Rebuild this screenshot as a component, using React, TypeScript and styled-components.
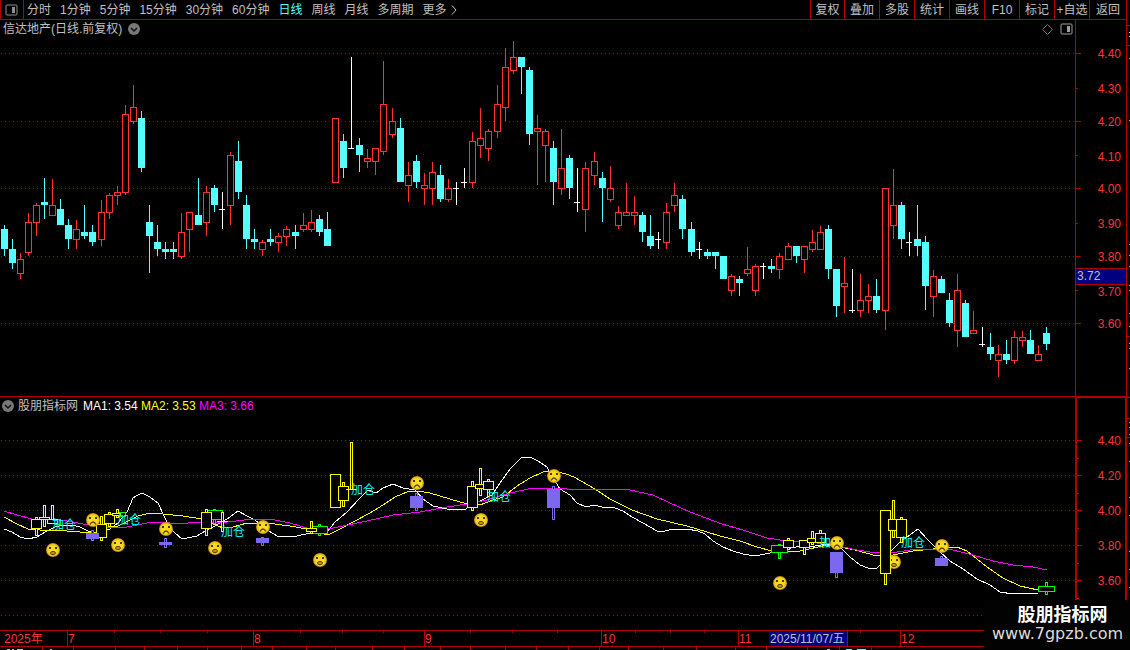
import React from "react";
import styled, { createGlobalStyle, css } from "styled-components";

const RED = "#b00000";
const LABEL_RED = "#ff3232";
const CYAN = "#54ffff";
const GREY = "#c0c0c0";
const FONT = '"Liberation Sans", "Noto Sans CJK SC", sans-serif';

const GlobalStyle = createGlobalStyle`
  * { box-sizing: border-box; }
  html, body { margin: 0; background: #000; }
  body { font: 12px/16px ${FONT}; color: ${GREY}; overflow: hidden; }
  button { font: inherit; color: inherit; background: none; border: 0; padding: 0; cursor: pointer; }
  svg { display: block; }
`;

/* ---------- layout ---------- */

const Page = styled.div`
  position: relative;
  display: flex;
  min-height: 100vh;
`;

const Workspace = styled.main`
  flex: 1;
  min-width: 0;
  display: flex;
  flex-direction: column;
`;

const SideStrip = styled.aside`
  width: 4px;
  border-left: 1px solid ${RED};
  overflow: hidden;
`;

const Toolbar = styled.nav`
  display: flex;
  justify-content: space-between;
  height: 20px;
  border-left: 1px solid ${RED};
  border-bottom: 1px solid ${RED};
`;

const Periods = styled.div`
  display: flex;
  align-items: center;
  gap: 9px;
`;

const PanelToggle = styled.button`
  display: flex;
  align-items: center;
  height: 19px;
  width: 23px;
  padding-left: 4px;
  margin-right: -6px;
  border-right: 1px solid ${RED};
`;

const PeriodTab = styled.button<{ $active?: boolean }>`
  height: 18px;
  white-space: nowrap;
  ${(p) => p.$active && css`color: ${CYAN};`}
`;

const MoreTab = styled(PeriodTab)`
  display: flex;
  align-items: center;
  gap: 4px;
`;

const Actions = styled.div`
  display: flex;
`;

const ActionButton = styled.button`
  width: 35px;
  padding-top: 1px;
  border-left: 1px solid ${RED};
  white-space: nowrap;
  &:first-child { width: 34px; }
  &:last-child { width: 37px; }
`;

const Pane = styled.section<{ $ruled?: boolean }>`
  display: flex;
  ${(p) => p.$ruled && css`border-bottom: 1px solid ${RED};`}
`;

const Plot = styled.div`
  flex: 1;
  min-width: 0;
`;

const PaneHeader = styled.header<{ $inset: number }>`
  display: flex;
  align-items: center;
  height: 20px;
  padding: 0 2px 2px ${(p) => p.$inset}px;
`;

const StockTitle = styled.h1`
  margin: 0 6px 0 0;
  font: inherit;
`;

const IndicatorTitle = styled.h2`
  margin: 0 5px 0 4px;
  font: inherit;
`;

const Reading = styled.span<{ $color: string }>`
  width: 58px;
  white-space: nowrap;
  color: ${(p) => p.$color};
`;

const HeaderTools = styled.div`
  display: flex;
  align-items: center;
  gap: 7px;
  margin-left: auto;
`;

const ChartSvg = styled.svg<{ $height: number }>`
  width: 100%;
  height: ${(p) => p.$height}px;
`;

const PriceAxis = styled.div<{ $heavy?: boolean }>`
  width: 51px;
  border-left: 1px solid ${RED};
  ${(p) => p.$heavy && css`
    width: 52px;
    margin: -1px -1px 0 0;
    border: 2px solid ${RED};
    border-bottom: 0;
    z-index: 1;
  `}
`;

const DateAxis = styled.div`
  position: relative;
  display: flex;
  height: 17px;
  border-top: 1px solid ${RED};
  border-bottom: 1px solid ${RED};
  color: ${LABEL_RED};
`;

const Month = styled.span<{ $span?: number }>`
  ${(p) => (p.$span ? css`width: ${p.$span}px;` : css`flex: 1;`)}
  border-left: 1px solid ${RED};
  &:first-child { border-left: 0; padding-left: 4px; }
`;

const DateTicks = styled.svg`
  position: absolute;
  inset: 0 auto auto 0;
  width: 100%;
  height: 2px;
`;

const DateCursor = styled.time`
  position: absolute;
  left: 769px;
  top: 0;
  width: 79px;
  height: 15px;
  padding-left: 1px;
  background: #000080;
  border-right: 1px solid ${RED};
  color: ${GREY};
  white-space: nowrap;
`;

const Footer = styled.footer`
  height: 3px;
  overflow: hidden;
`;

const Watermark = styled.a`
  position: absolute;
  right: 0;
  bottom: 0;
  z-index: 2;
  width: 146px;
  height: 50px;
  padding: 2px 6px 0 7px;
  background: #020202;
  color: #fff;
  text-align: center;
  text-decoration: none;
`;

const SiteName = styled.strong`
  display: block;
  padding-left: 10px;
  font: bold 18px/23px "Noto Sans CJK SC", sans-serif;
`;

const SiteUrl = styled.span`
  display: block;
  font: 16px/18px "DejaVu Sans", sans-serif;
  white-space: nowrap;
  color: #dcdcdc;
`;

/* ---------- data ---------- */

// centre x, high, body top, body bottom, low, kind (r = rise, c = fall, w = flat)
type Candle = [number, number, number, number, number, "r" | "c" | "w"];

const candles: Candle[] = [
  [4, 225, 229, 249, 256, "c"], [12, 239, 249, 263, 269, "c"], [20, 253, 259, 274, 279, "r"],
  [28, 213, 222, 253, 256, "r"], [36, 203, 205, 223, 236, "r"], [44, 178, 202, 205, 219, "c"],
  [52, 179, 205, 216, 216, "r"], [60, 199, 209, 225, 225, "c"], [68, 219, 225, 239, 249, "c"],
  [76, 220, 229, 240, 249, "r"], [84, 205, 232, 236, 239, "c"], [92, 225, 232, 242, 246, "c"],
  [101, 200, 212, 240, 246, "r"], [109, 193, 195, 213, 219, "r"], [117, 186, 192, 196, 205, "r"],
  [125, 105, 114, 193, 195, "r"], [133, 85, 107, 122, 124, "r"], [141, 111, 118, 168, 172, "c"],
  [149, 205, 222, 236, 273, "c"], [157, 225, 242, 249, 256, "c"], [165, 242, 249, 252, 259, "c"],
  [173, 242, 249, 252, 259, "c"], [181, 213, 232, 257, 259, "r"], [189, 212, 212, 230, 252, "r"],
  [198, 178, 215, 225, 225, "c"], [206, 186, 192, 223, 236, "r"], [214, 185, 188, 205, 212, "c"],
  [222, 192, 209, 210, 229, "w"], [230, 152, 155, 206, 225, "r"], [238, 141, 161, 192, 199, "c"],
  [246, 195, 205, 239, 249, "c"], [254, 229, 239, 242, 249, "c"], [262, 240, 242, 250, 256, "r"],
  [270, 229, 239, 242, 246, "c"], [278, 233, 236, 243, 252, "r"], [286, 226, 229, 237, 246, "r"],
  [295, 225, 232, 236, 249, "c"], [303, 213, 225, 230, 232, "r"], [311, 210, 222, 230, 232, "r"],
  [319, 215, 219, 232, 236, "c"], [327, 212, 229, 246, 246, "c"], [335, 118, 118, 183, 183, "r"],
  [343, 134, 141, 168, 178, "c"], [351, 57, 148, 149, 149, "w"], [359, 138, 145, 155, 172, "c"],
  [367, 149, 158, 162, 168, "r"], [375, 148, 148, 162, 175, "r"], [383, 61, 104, 152, 155, "r"],
  [392, 108, 121, 135, 138, "r"], [400, 118, 128, 182, 182, "c"], [408, 162, 175, 186, 202, "r"],
  [416, 155, 161, 182, 188, "c"], [424, 173, 185, 189, 205, "r"], [432, 162, 172, 189, 205, "r"],
  [440, 165, 175, 199, 202, "c"], [448, 179, 188, 200, 202, "r"], [456, 182, 188, 189, 205, "w"],
  [464, 168, 182, 183, 188, "w"], [472, 132, 141, 183, 188, "r"], [480, 108, 138, 146, 158, "r"],
  [488, 129, 131, 149, 161, "r"], [497, 85, 104, 132, 138, "r"], [505, 48, 67, 108, 121, "r"],
  [513, 41, 57, 71, 74, "r"], [521, 57, 57, 67, 94, "c"], [529, 67, 70, 134, 145, "c"],
  [537, 115, 128, 132, 185, "r"], [545, 129, 131, 146, 182, "r"], [553, 141, 148, 182, 205, "c"],
  [561, 129, 168, 189, 195, "r"], [569, 155, 158, 188, 199, "c"], [577, 168, 202, 203, 212, "w"],
  [585, 162, 168, 210, 232, "r"], [594, 152, 161, 176, 185, "r"], [602, 172, 178, 188, 222, "c"],
  [610, 166, 188, 200, 202, "r"], [618, 206, 212, 226, 229, "r"], [626, 183, 212, 216, 216, "r"],
  [634, 196, 212, 216, 225, "r"], [642, 212, 215, 232, 242, "c"], [650, 215, 236, 246, 249, "c"],
  [658, 232, 239, 240, 249, "w"], [666, 203, 212, 243, 249, "r"], [674, 183, 195, 206, 212, "r"],
  [682, 195, 199, 229, 239, "c"], [691, 222, 229, 252, 256, "c"], [699, 242, 249, 250, 259, "w"],
  [707, 249, 252, 256, 259, "c"], [715, 252, 252, 256, 269, "c"], [723, 256, 256, 279, 279, "c"],
  [731, 274, 276, 291, 296, "r"], [739, 276, 279, 283, 296, "c"], [747, 247, 269, 274, 276, "r"],
  [755, 264, 266, 291, 296, "r"], [763, 263, 266, 267, 279, "w"], [771, 259, 266, 269, 273, "c"],
  [779, 253, 256, 270, 279, "r"], [788, 243, 246, 260, 260, "r"], [796, 246, 246, 256, 263, "c"],
  [804, 246, 246, 260, 273, "r"], [812, 230, 242, 250, 252, "r"], [820, 226, 232, 250, 250, "r"],
  [828, 225, 229, 269, 279, "c"], [836, 269, 269, 306, 317, "c"], [844, 257, 283, 287, 313, "r"],
  [852, 269, 310, 311, 313, "w"], [860, 274, 300, 311, 317, "r"], [868, 284, 296, 301, 313, "r"],
  [876, 279, 296, 310, 313, "c"], [885, 188, 188, 311, 330, "r"], [893, 169, 205, 226, 239, "r"],
  [901, 202, 205, 239, 249, "c"], [909, 232, 242, 243, 256, "w"], [917, 205, 239, 246, 256, "c"],
  [925, 236, 242, 286, 310, "c"], [933, 270, 276, 297, 317, "r"], [941, 276, 279, 293, 293, "c"],
  [949, 293, 300, 323, 327, "c"], [957, 274, 290, 331, 347, "r"], [965, 300, 303, 337, 337, "c"],
  [973, 311, 330, 334, 334, "r"], [982, 327, 344, 345, 347, "w"], [990, 333, 347, 354, 360, "c"],
  [998, 345, 354, 361, 377, "r"], [1006, 340, 354, 360, 364, "c"], [1014, 331, 337, 361, 364, "r"],
  [1022, 331, 337, 341, 347, "r"], [1030, 330, 340, 354, 354, "c"], [1038, 345, 354, 361, 361, "r"],
  [1046, 327, 333, 344, 350, "c"],
];

const ma1 =
  "4,529 12,532 20,537 28,539 37,537 45,532 55,527 63,525 72,525 80,527 88,531 97,533 110,529 118,523 127,512 133,498 138,495 142,493 150,497 158,503 165,518 170,528 175,533 182,539 197,536 205,531 213,527 227,519 238,511 247,516 255,520 267,530 279,537 297,536 310,533 327,532 335,522 347,512 360,498 368,490 376,493 383,488 393,484 403,488 415,490 423,499 433,506 447,509 466,509 472,504 480,501 492,495 500,483 510,469 522,457 530,457 538,461 547,467 553,478 560,489 570,495 577,503 586,507 594,505 602,507 615,508 623,511 632,517 643,523 650,527 657,531 665,531 673,529 687,529 698,531 705,534 713,541 723,547 733,551 743,554 755,556 770,553 787,549 800,546 815,546 828,544 842,549 850,557 860,565 868,568 877,568 882,563 892,550 900,542 910,535 918,529 927,539 940,552 950,561 963,569 977,579 990,585 1000,592 1013,594 1038,593";
const ma2 =
  "4,517 17,524 28,529 40,530 67,531 80,532 97,532 110,527 118,526 130,520 138,516 150,513 163,514 183,516 202,519 213,524 223,528 233,527 247,523 267,523 290,526 307,529 328,535 340,529 353,522 370,513 383,505 395,497 407,492 417,491 430,493 450,499 467,504 480,505 493,500 503,497 517,486 530,478 543,472 553,471 566,474 574,477 595,489 610,499 632,510 657,519 687,526 707,532 720,536 740,541 757,547 772,551 800,551 827,545 840,547 855,550 877,556 893,555 913,551 933,549 957,547 967,551 987,567 1003,578 1020,586 1038,590";
const ma3 =
  "4,511 17,515 32,519 50,519 67,521 83,524 113,528 127,527 147,523 163,522 177,524 200,522 227,522 253,519 270,519 290,523 310,529 328,529 343,526 367,521 393,515 420,512 447,507 467,504 487,500 510,493 533,488 560,488 567,489 607,489 630,490 653,495 670,503 690,512 722,524 743,530 767,538 787,541 817,543 833,544 843,547 857,550 877,553 897,552 917,549 933,549 953,550 973,555 993,561 1013,565 1033,567 1047,570";

// body x, y, width, height, wick x, high, low
type Box = [number, number, number, number, number, number, number];

const greenBoxes: Box[] = [
  [55, 519, 6, 6, 57, 519, 525], [118, 512, 8, 5, 121, 512, 517], [207, 510, 16, 10, 213, 509, 524],
  [312, 526, 16, 8, 318, 524, 536], [771, 545, 17, 8, 778, 544, 559], [1038, 586, 17, 6, 1045, 582, 595],
];

const yellowBoxes: Box[] = [
  [31, 519, 11, 10, 35, 517, 536], [39, 517, 11, 3, 43, 505, 527], [47, 519, 11, 5, 51, 505, 524],
  [96, 524, 11, 14, 100, 516, 541], [104, 514, 11, 10, 108, 512, 527], [112, 513, 9, 3, 116, 509, 518],
  [201, 512, 11, 17, 205, 509, 536], [217, 521, 11, 1, 221, 512, 532], [306, 528, 11, 4, 310, 521, 534],
  [330, 474, 11, 34, 334, 474, 508], [338, 486, 11, 15, 342, 482, 507], [346, 489, 11, 1, 350, 442, 490],
  [467, 486, 11, 22, 471, 481, 511], [475, 484, 11, 5, 479, 468, 496], [483, 481, 11, 9, 487, 479, 497],
  [783, 540, 11, 8, 787, 538, 550], [799, 540, 11, 8, 803, 540, 555], [807, 538, 11, 5, 811, 531, 545],
  [815, 533, 11, 10, 819, 530, 543], [880, 510, 11, 64, 884, 510, 585], [888, 519, 11, 12, 892, 500, 538],
  [896, 519, 11, 19, 900, 517, 543],
];

const violetBoxes: Box[] = [
  [86, 533, 13, 6, 91, 530, 541], [159, 542, 13, 3, 164, 538, 548], [256, 538, 13, 5, 261, 537, 546],
  [410, 496, 13, 12, 415, 493, 511], [547, 489, 13, 19, 552, 486, 520], [830, 552, 13, 21, 835, 552, 578],
  [935, 558, 13, 8, 940, 556, 566],
];

const sadFaces = [[93, 520], [166, 529], [263, 527], [417, 483], [554, 476], [837, 543], [942, 546]];
const gaspFaces = [[53, 550], [118, 545], [215, 548], [320, 560], [481, 520], [780, 583]];
const addMarks = [[52, 529], [117, 524], [221, 536], [351, 494], [487, 501], [819, 547], [901, 547]];

const months: [string, number?][] = [["2025年", 67], ["7", 186], ["8", 171], ["9", 177], ["10", 137], ["11", 162], ["12"]];
const weekTicks = [114, 160, 207, 300, 342, 383, 470, 512, 557, 635, 670, 704, 820, 860];

const periodsBefore = ["分时", "1分钟", "5分钟", "15分钟", "30分钟", "60分钟", "日线", "周线", "月线", "多周期"];
const actions = ["复权", "叠加", "多股", "统计", "画线", "F10", "标记", "+自选", "返回"];

/* ---------- drawings ---------- */

const PanelIcon = ({ color }: { color: string }) => (
  <svg width="13" height="12" viewBox="0 0 13 12" aria-hidden="true">
    <rect x="1" y="1" width="11" height="10" rx="1" fill="none" stroke={color} />
    <rect x="7" y="3" width="3" height="6" fill={color} />
  </svg>
);

const ChevronDisc = () => (
  <svg width="12" height="12" viewBox="0 0 12 12" aria-hidden="true">
    <circle cx="6" cy="6" r="6" fill="#787878" />
    <path d="M3 5l3 3 3-3" fill="none" stroke="#101010" strokeWidth="1.5" />
  </svg>
);

const DotLine = ({ y }: { y: number }) => (
  <line x1="1" x2="100%" y1={y + 0.5} y2={y + 0.5} stroke="#a01010" strokeDasharray="1 3" shapeRendering="crispEdges" />
);

const CandleShape = ({ candle: [x, hi, top, bottom, lo, kind] }: { candle: Candle }) => {
  if (kind === "w") {
    return <path fill="#fff" d={`M${x} ${hi}h1V${lo}h-1zM${x - 3} ${top}h6v1h-6z`} />;
  }
  const color = kind === "r" ? LABEL_RED : CYAN;
  return (
    <g fill={color}>
      <rect x={x} y={hi} width="1" height={top - hi} />
      <rect x={x} y={bottom} width="1" height={lo - bottom} />
      {kind === "c" ? (
        <rect x={x - 3} y={top} width="7" height={bottom - top} />
      ) : (
        <rect x={x - 2.5} y={top + 0.5} width="6" height={bottom - top - 1} fill="#000" stroke={color} />
      )}
    </g>
  );
};

const BoxShape = ({ box: [x, y, w, h, wx, hi, lo], color, solid }: { box: Box; color: string; solid?: boolean }) => (
  <g fill="#000" stroke={color} shapeRendering="crispEdges">
    {hi < y && <rect x={wx + 0.5} y={hi + 0.5} width="2" height={y - hi} />}
    {lo > y + h && <rect x={wx + 0.5} y={y + h - 0.5} width="2" height={lo - y - h} />}
    {h > 1 ? (
      <rect x={x + 0.5} y={y + 0.5} width={w - 1} height={h - 1} fill={solid ? color : "#000"} />
    ) : (
      <line x1={x} x2={x + w} y1={y + 0.5} y2={y + 0.5} />
    )}
  </g>
);

const Face = ({ x, y, sad }: { x: number; y: number; sad?: boolean }) => (
  <g transform={`translate(${x} ${y})`}>
    <circle r="7" fill="url(#face)" />
    <path d="M-4-3h2v2h-2zM2-3h2v2h-2z" fill="#4a3800" />
    {sad ? (
      <path d="M-3 4.5Q0-.5 3 4.5" fill="none" stroke="#5a4200" strokeWidth="1.3" />
    ) : (
      <ellipse cy="3" rx="2.5" ry="1.6" fill="#c09818" stroke="#5a4200" />
    )}
  </g>
);

const PriceTicks = ({ major, minor }: { major: [string, number][]; minor: number[] }) => (
  <>
    {major.map(([text, y]) => (
      <rect key={text} y={y} width="5" height="1" fill={RED} />
    ))}
    {minor.map((y) => (
      <rect key={y} y={y} width="2" height="1" fill={RED} />
    ))}
  </>
);

const PriceLabels = ({ x, labels }: { x: number; labels: [string, number][] }) => (
  <g fill={LABEL_RED} textAnchor="end" fontFamily={FONT} fontSize="12">
    {labels.map(([text, y]) => (
      <text key={text} x={x} y={y + 5}>{text}</text>
    ))}
  </g>
);

const upperMajor: [string, number][] = [["4.40", 53], ["4.20", 121], ["4.00", 188], ["3.80", 256], ["3.60", 323]];
const upperMinor: [string, number][] = [["4.30", 88], ["4.10", 156], ["3.90", 223], ["3.70", 291]];
const lowerMajor: [string, number][] = [["4.40", 440], ["4.20", 475], ["4.00", 510], ["3.80", 545], ["3.60", 580]];

const footerCells = [42, 73, 115, 144, 177, 207, 241, 272, 306, 335, 372, 404, 440, 470, 505, 536, 568, 599, 628, 663, 696, 735, 766, 807, 839, 871];
const stripMarks = [32, 36, 58, 120, 244, 255, 266, 285, 290, 313, 326, 343, 348, 368, 422, 427, 434, 443, 461, 497, 515, 551, 569, 587];

export default function App() {
  return (
    <>
      <GlobalStyle />
      <Page>
        <Workspace>
          <Toolbar aria-label="周期">
            <Periods>
              <PanelToggle aria-label="侧栏"><PanelIcon color="#909090" /></PanelToggle>
              {periodsBefore.map((name) => (
                <PeriodTab key={name} $active={name === "日线"}>{name}</PeriodTab>
              ))}
              <MoreTab>
                更多
                <svg width="6" height="10" viewBox="0 0 6 10" aria-hidden="true">
                  <path d="M1 0.5l4 4.5-4 4.5" fill="none" stroke={GREY} />
                </svg>
              </MoreTab>
            </Periods>
            <Actions>
              {actions.map((name) => (
                <ActionButton key={name}>{name}</ActionButton>
              ))}
            </Actions>
          </Toolbar>

          <Pane $ruled>
            <Plot>
              <PaneHeader $inset={3}>
                <StockTitle>信达地产(日线.前复权)</StockTitle>
                <button aria-label="展开"><ChevronDisc /></button>
                <HeaderTools>
                  <svg width="11" height="11" viewBox="0 0 11 11" aria-hidden="true">
                    <path d="M5.5 0.5l5 5-5 5-5-5z" fill="none" stroke="#707070" />
                  </svg>
                  <button aria-label="面板"><PanelIcon color="#a0a0a0" /></button>
                </HeaderTools>
              </PaneHeader>
              <ChartSvg $height={356} role="img" aria-label="日线 K 线图">
                <g transform="translate(0 -40)">
                  {upperMajor.map(([, y]) => <DotLine key={y} y={y} />)}
                  {candles.map((c) => <CandleShape key={c[0]} candle={c} />)}
                </g>
              </ChartSvg>
            </Plot>
            <PriceAxis>
              <ChartSvg $height={376}>
                <g transform="translate(0 -20)">
                  <PriceTicks major={upperMajor} minor={[88, 155, 223, 290]} />
                  <PriceLabels x={45} labels={[...upperMajor, ...upperMinor]} />
                  <rect y="268" width="50" height="17" fill={RED} />
                  <rect y="269" width="50" height="15" fill="#000080" />
                  <text x="1" y="280" fill={GREY} fontSize="12">3.72</text>
                </g>
              </ChartSvg>
            </PriceAxis>
          </Pane>

          <Pane>
            <Plot>
              <PaneHeader $inset={2}>
                <button aria-label="指标设置"><ChevronDisc /></button>
                <IndicatorTitle>股朋指标网</IndicatorTitle>
                <Reading $color="#ffffff">MA1: 3.54</Reading>
                <Reading $color="#ffff00">MA2: 3.53</Reading>
                <Reading $color="#ff00ff">MA3: 3.66</Reading>
              </PaneHeader>
              <ChartSvg $height={213} role="img" aria-label="均线指标图">
                <defs>
                  <radialGradient id="face">
                    <stop offset="0.6" stopColor="#fadc1e" />
                    <stop offset="0.85" stopColor="#e8b820" />
                    <stop offset="1" stopColor="#a87808" />
                  </radialGradient>
                </defs>
                <g transform="translate(0 -417)">
                  {[440, 475, 510, 545, 580, 615].map((y) => <DotLine key={y} y={y} />)}
                  <g fill="none" shapeRendering="crispEdges">
                    <polyline points={ma1} stroke="#fff" />
                    <polyline points={ma2} stroke="#ff0" />
                    <polyline points={ma3} stroke="#f0f" />
                  </g>
                  <Face x={894} y={562} />
                  {greenBoxes.map((b) => <BoxShape key={b[0]} box={b} color="#00ff00" />)}
                  {yellowBoxes.map((b) => <BoxShape key={b[0]} box={b} color="#ffff00" />)}
                  {violetBoxes.map((b) => <BoxShape key={b[0]} box={b} color="#7b68ee" solid />)}
                  {addMarks.map(([x, y]) => (
                    <text key={x} x={x} y={y} fill="#00f0f0" fontFamily={FONT} fontSize="12">加仓</text>
                  ))}
                  {gaspFaces.map(([x, y]) => <Face key={x} x={x} y={y} />)}
                  {sadFaces.map(([x, y]) => <Face key={x} x={x} y={y} sad />)}
                </g>
              </ChartSvg>
            </Plot>
            <PriceAxis $heavy>
              <ChartSvg $height={232}>
                <g transform="translate(0 -398)">
                  <PriceTicks major={lowerMajor} minor={[458, 493, 528, 563, 598]} />
                  <PriceLabels x={44} labels={lowerMajor} />
                </g>
              </ChartSvg>
            </PriceAxis>
          </Pane>

          <DateAxis>
            {months.map(([name, span]) => (
              <Month key={name} $span={span}>{name}</Month>
            ))}
            <DateTicks aria-hidden="true">
              {weekTicks.map((x) => <rect key={x} x={x} width="1" height="2" fill={RED} />)}
            </DateTicks>
            <DateCursor dateTime="2025-11-07">2025/11/07/五</DateCursor>
          </DateAxis>

          <Footer>
            <svg width="100%" height="3" aria-hidden="true">
              {footerCells.map((x) => <rect key={x} x={x} width="1" height="3" fill={RED} />)}
              <path d="M7 2h3v1h-3zM12 2h2v1h-2zM17 2h6v1h-6zM50 2h2v1h-2zM827 2h3v1h-3z" fill={GREY} />
              <path d="M846 2h6v1h-6zM857 2h9v1h-9z" fill={CYAN} />
            </svg>
          </Footer>
        </Workspace>

        <SideStrip>
          <svg width="3" height="650" aria-hidden="true">
            {[25, 45, 336, 397, 418, 437].map((y) => <rect key={y} y={y} width="3" height="1" fill={RED} />)}
            {stripMarks.map((y) => <rect key={y} x="2" y={y} width="1" height="1" fill={GREY} />)}
          </svg>
        </SideStrip>

        <Watermark href="#">
          <SiteName>股朋指标网</SiteName>
          <SiteUrl>www.7gpzb.com</SiteUrl>
        </Watermark>
      </Page>
    </>
  );
}
